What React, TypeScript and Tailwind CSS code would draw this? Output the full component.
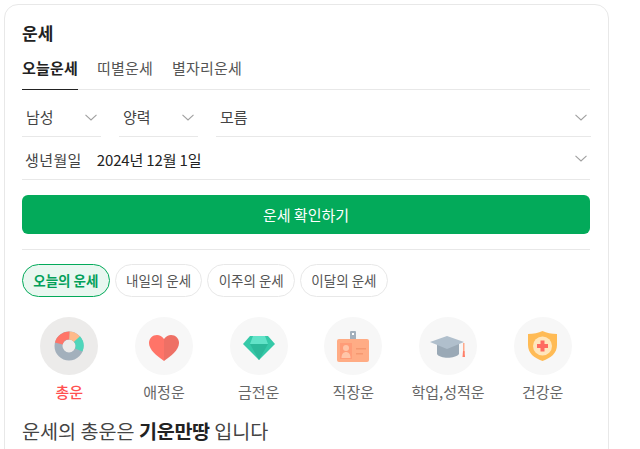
const fontStack = "font-['Noto_Sans_CJK_KR','Liberation_Sans',sans-serif]";

function Chevron() {
  return (
    <svg width="12" height="7" viewBox="0 0 12 7" fill="none" className="shrink-0">
      <path d="M.5.8L6 6l5.500-5.200" stroke="#a0a0a0" strokeWidth="1.100" />
    </svg>
  );
}

function SelectBox({ label, className }: { label: string; className: string }) {
  return (
    <div className={`flex h-[39px] items-center justify-between border-b border-[#e8e8e8] pl-1 pr-[4px] ${className}`}>
      <span className="text-[15px] text-[#444]">{label}</span>
      <Chevron />
    </div>
  );
}

function TotalIcon() {
  return (
    <svg width="30" height="30" viewBox="0 0 30 30" fill="none">
      <circle cx="15" cy="15" r="10.500" stroke="#a3b0bc" strokeWidth="8" />
      <path d="M4.800 12.500A10.500 10.500 0 0 1 15.500 4.500" stroke="#ff7468" strokeWidth="8" />
      <path d="M15.500 4.500a10.500 10.500 0 0 1 8 4.500" stroke="#ffb98a" strokeWidth="8" />
      <path d="M23 8a10.500 10.500 0 0 1 1.800 11" stroke="#4fd6bb" strokeWidth="8" />
    </svg>
  );
}

function HeartIcon() {
  return (
    <svg width="30" height="26" viewBox="0 0 30 26" className="mt-1">
      <path d="M15 4C13 1.500 10.500 0 8 0 3.500 0 0 3.500 0 8c0 7 8 13 15 18z" fill="#ff7468" />
      <path d="M15 4c2-2.500 4.500-4 7-4 4.500 0 8 3.500 8 8 0 7-8 13-15 18z" fill="#ee7065" />
    </svg>
  );
}

function DiamondIcon() {
  return (
    <svg width="32" height="24" viewBox="0 0 32 24" className="mt-1">
      <path d="M7 0h18l7 8-16 16L0 8z" fill="#35c9a8" />
      <path d="M10 0h12l3 8H7z" fill="#62e3c8" />
      <path d="M7 8h18l-9 16z" fill="#2cb99a" />
    </svg>
  );
}

function BadgeIcon() {
  return (
    <svg width="32" height="31" viewBox="0 0 32 31">
      <rect x="13" y="0" width="6" height="10" rx="1" fill="#a3b0bc" />
      <rect x="15" y="2" width="2" height="2" fill="#fff" />
      <rect x="0" y="8" width="32" height="23" rx="2" fill="#ffac85" />
      <rect x="3" y="12" width="12" height="16" fill="#ff9c78" />
      <circle cx="9" cy="17" r="3" fill="#ffc5a8" />
      <path d="M4.500 27c0-4 2-6 4.500-6s4.500 2 4.500 6z" fill="#ffc5a8" />
      <rect x="19" y="17" width="10" height="1.500" fill="#f59870" />
      <rect x="19" y="22" width="7" height="1.500" fill="#f59870" />
    </svg>
  );
}

function CapIcon() {
  return (
    <svg width="35" height="22" viewBox="0 0 35 22" className="mt-[2px]">
      <path d="M7 8v10c3 5 18 5 22 0V8z" fill="#9aa9b6" />
      <path d="M0 6l17-6 17 6-17 7z" fill="#b0bfcc" />
      <rect x="33" y="7" width="1.500" height="10" fill="#ffa98a" />
      <path d="M33 15h1.500l.5 6h-2.500z" fill="#ff7e68" />
    </svg>
  );
}

function ShieldIcon() {
  return (
    <svg width="29" height="30" viewBox="0 0 29 30">
      <path d="M14.500 0c4 2 9 3 14.500 3v11c0 8-6 13-14.500 16C6 27 0 22 0 14V3c5.500 0 10.500-1 14.500-3z" fill="#ffbb55" />
      <circle cx="14.500" cy="15" r="9.500" fill="#ffe6bd" />
      <path d="M12.500 9.500h4v3.500H20v4h-3.500v3.500h-4V17H9v-4h3.500z" fill="#ff6a60" />
    </svg>
  );
}

const chips = ["오늘의 운세", "내일의 운세", "이주의 운세", "이달의 운세"];

const fortunes = [
  { label: "총운", icon: <TotalIcon />, active: true },
  { label: "애정운", icon: <HeartIcon /> },
  { label: "금전운", icon: <DiamondIcon /> },
  { label: "직장운", icon: <BadgeIcon /> },
  { label: "학업,성적운", icon: <CapIcon /> },
  { label: "건강운", icon: <ShieldIcon /> },
];

export default function App() {
  return (
    <div className={`h-[449px] overflow-hidden bg-white pl-1 pr-[31px] pt-1 ${fontStack}`}>
      <section className="rounded-[14px] border border-[#e8e8e8] pb-4 pl-[17px] pr-[18px] pt-[14px]">
        <h2 className="text-[17px] font-bold leading-[28px] text-[#222]">운세</h2>

        <nav className="mt-[5px] flex h-[38px] gap-[19px] border-b border-[#e8e8e8] text-[15px] leading-[31px] tracking-[0.2px]">
          <span className="h-[38px] border-b border-[#222] font-bold text-[#222]">오늘운세</span>
          <span className="text-[#555]">띠별운세</span>
          <span className="text-[#555]">별자리운세</span>
        </nav>

        <div className="-mr-px mt-2 flex gap-[18px]">
          <SelectBox label="남성" className="w-[79px]" />
          <SelectBox label="양력" className="w-[79px]" />
          <SelectBox label="모름" className="flex-1" />
        </div>

        <div className="flex h-[43px] items-center justify-between border-b border-[#e8e8e8] px-[3px]">
          <div className="flex items-center gap-[15px] pt-[4px] text-[15px]">
            <span className="tracking-[0.4px] text-[#444]">생년월일</span>
            <span className="tracking-[-0.15px] text-[#222]">2024년 12월 1일</span>
          </div>
          <Chevron />
        </div>

        <button className="mt-[15px] flex h-[39px] w-full items-center justify-center rounded-[6px] bg-[#03aa5a] pt-px text-[15px] text-white">
          운세 확인하기
        </button>

        <div className="mt-[15px] flex gap-[5px] border-t border-[#e8e8e8] pt-[14px]">
          {chips.map((chip, i) => (
            <span
              key={chip}
              className={
                i === 0
                  ? "flex h-[33px] w-[87.7px] items-center justify-center rounded-full border border-[#03aa5a] bg-[#e9f7f0] text-[13.5px] font-bold text-[#03a05a]"
                  : "flex h-[33px] w-[87.7px] items-center justify-center rounded-full border border-[#e8e8e8] text-[13.5px] text-[#555]"
              }
            >
              {chip}
            </span>
          ))}
        </div>

        <div className="mt-5 grid grid-cols-6">
          {fortunes.map((item) => (
            <div key={item.label} className="flex flex-col items-center">
              <div
                className={`flex h-[58px] w-[58px] items-center justify-center rounded-full ${
                  item.active ? "bg-[#ecebea]" : "bg-[#f7f7f7]"
                }`}
              >
                {item.icon}
              </div>
              <span
                className={`mt-[7px] text-[15px] leading-5 ${
                  item.active ? "font-medium text-[#ff5050]" : "text-[#666]"
                }`}
              >
                {item.label}
              </span>
            </div>
          ))}
        </div>

        <p className="mt-[15px] text-[19.6px] leading-7 text-[#444]">
          운세의 총운은 <strong className="font-bold tracking-[-0.3px] text-[#222]">기운만땅</strong> 입니다
        </p>
        <p className="text-[12px] leading-4 text-[#888]">2024.12.02</p>
      </section>
    </div>
  );
}
